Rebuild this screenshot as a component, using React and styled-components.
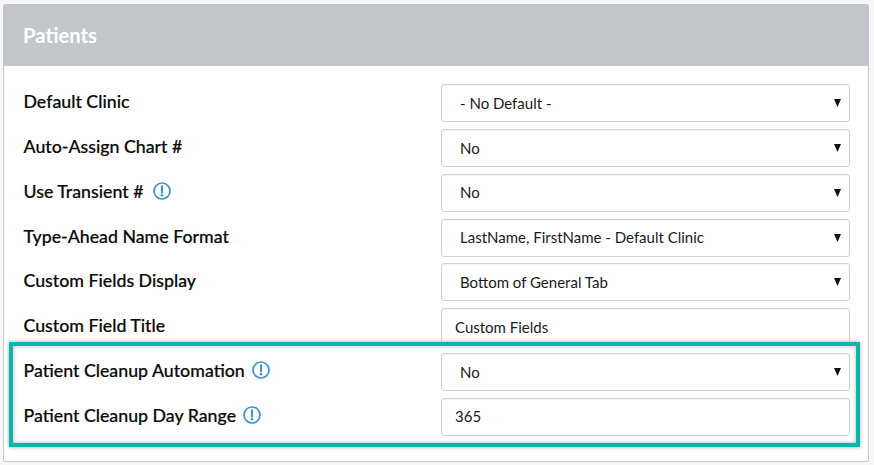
import React from 'react';
import styled, { createGlobalStyle } from 'styled-components';

const GlobalStyle = createGlobalStyle`
html, body {
  margin: 0;
  padding: 0;
  background: #f7f7f7;
}
body {
  width: 874px;
  height: 465px;
  overflow: hidden;
  font-family: Lato, "Liberation Sans", sans-serif;
}
`;

const Page = styled.div`
padding: 4px 5px 0 3px;
`;

const Panel = styled.section`
position: relative;
height: 458px;
box-sizing: border-box;
background: #fff;
border: 1px solid #c9cbce;
border-top: 0;
border-radius: 3px;
`;

const PanelHeader = styled.h2`
margin: 0 -1px;
height: 62px;
padding: 0 20px 1px;
box-sizing: border-box;
display: flex;
align-items: center;
background: #c3c6ca;
border-radius: 3px 3px 0 0;
color: #fff;
font-size: 20.3px;
font-weight: 700;
`;

const Form = styled.div`
display: flex;
flex-direction: column;
padding: 18px 19px 0 19.5px;
gap: 6.85px;
`;

const Row = styled.div`
display: grid;
grid-template-columns: 417.5px 409px;
align-items: center;
height: 38px;
`;

const Label = styled.label`
display: flex;
align-items: center;
gap: ${props => props.$gap || 7}px;
margin-top: -4px;
color: #0a0a0a;
font-size: 17.75px;
font-weight: 500;
-webkit-text-stroke: 0.2px #0a0a0a;
`;

const FieldWrap = styled.div`
position: relative;
height: 38px;
`;

const Select = styled.select`
appearance: none;
-webkit-appearance: none;
width: 100%;
height: 100%;
box-sizing: border-box;
padding: 0 18px 0.5px;
background: #fff;
border: 1px solid #d2d2d2;
border-radius: 3px;
box-shadow: inset 0 1px 1px rgba(0, 0, 0, 0.05);
color: #1a1a1a;
font-family: Lato, sans-serif;
font-size: 15px;
`;

const Input = styled.input`
width: 100%;
height: 100%;
box-sizing: border-box;
padding: 0 13px 1px;
background: #fff;
border: 1px solid #d2d2d2;
border-radius: 3px;
box-shadow: inset 0 1px 1px rgba(0, 0, 0, 0.05);
color: #1a1a1a;
font-family: Lato, sans-serif;
font-size: 15px;
`;

const Caret = styled.svg`
position: absolute;
right: 9px;
top: 15px;
width: 7px;
height: 8px;
pointer-events: none;
`;

const Highlight = styled.div`
position: absolute;
left: 5px;
top: 338px;
width: 851px;
height: 105px;
box-sizing: border-box;
border: 4px solid #0fb5ac;
box-shadow: 0 0 4px rgba(0, 0, 0, 0.35), inset 0 0 4px rgba(0, 0, 0, 0.3);
pointer-events: none;
`;

function InfoIcon() {
  return (
    <svg width="18" height="18" viewBox="0 0 18 18" aria-hidden="true">
      <circle cx="9" cy="9" r="8" fill="none" stroke="#3f93cf" strokeWidth="1.7" />
      <path d="M9 4.2v6.2" stroke="#3f93cf" strokeWidth="2.1" strokeLinecap="round" />
      <circle cx="9" cy="13.3" r="1.25" fill="#3f93cf" />
    </svg>
  );
}

function SelectField({ value, options }) {
  return (
    <FieldWrap>
      <Select defaultValue={value}>
        {(options || [value]).map(o => <option key={o}>{o}</option>)}
      </Select>
      <Caret viewBox="0 0 7 8" aria-hidden="true"><path d="M0 0h7L3.5 8z" fill="#111" /></Caret>
    </FieldWrap>
  );
}

function TextField({ value }) {
  return (
    <FieldWrap>
      <Input defaultValue={value} />
    </FieldWrap>
  );
}

export default function App() {
  return (
    <Page>
      <GlobalStyle />
      <Panel>
        <PanelHeader>Patients</PanelHeader>
        <Form>
          <Row>
            <Label>Default Clinic</Label>
            <SelectField value="- No Default -" />
          </Row>
          <Row>
            <Label>Auto-Assign Chart #</Label>
            <SelectField value="No" options={['No', 'Yes']} />
          </Row>
          <Row>
            <Label $gap={10}>Use Transient # <InfoIcon /></Label>
            <SelectField value="No" options={['No', 'Yes']} />
          </Row>
          <Row>
            <Label>Type-Ahead Name Format</Label>
            <SelectField value="LastName, FirstName - Default Clinic" />
          </Row>
          <Row>
            <Label>Custom Fields Display</Label>
            <SelectField value="Bottom of General Tab" />
          </Row>
          <Row>
            <Label>Custom Field Title</Label>
            <TextField value="Custom Fields" />
          </Row>
          <Row>
            <Label>Patient Cleanup Automation <InfoIcon /></Label>
            <SelectField value="No" options={['No', 'Yes']} />
          </Row>
          <Row>
            <Label>Patient Cleanup Day Range <InfoIcon /></Label>
            <TextField value="365" />
          </Row>
        </Form>
        <Highlight />
      </Panel>
    </Page>
  );
}
